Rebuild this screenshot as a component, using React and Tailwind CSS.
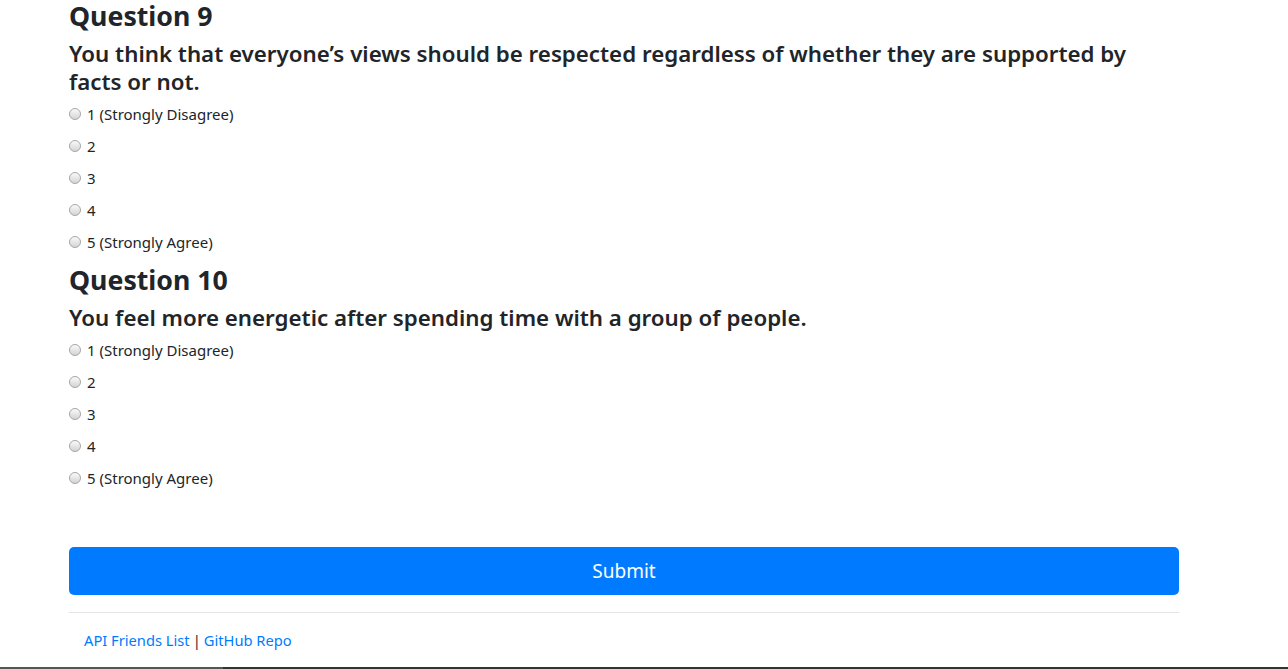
import React from 'react'

const questions = [
  {
    n: 9,
    text: 'You think that everyone’s views should be respected regardless of whether they are supported by facts or not.',
  },
  {
    n: 10,
    text: 'You feel more energetic after spending time with a group of people.',
  },
]

const options = ['1 (Strongly Disagree)', '2', '3', '4', '5 (Strongly Agree)']

function Radio() {
  return (
    <span className="inline-block w-[12px] h-[12px] rounded-full border border-[#a6a6a6] bg-gradient-to-b from-[#fafafa] to-[#d4d4d4] mr-[6px] shrink-0"></span>
  )
}

export default function App() {
  return (
    <div className="h-[669px] flex flex-col bg-white text-[#212529] font-['Noto_Sans',sans-serif] overflow-hidden">
      <div className="ml-[69px] w-[1110px] flex-1">
        {questions.map((q, i) => (
          <div key={q.n} className={i > 0 ? 'mt-[5px]' : ''}>
            <h3 className="text-[26.7px] leading-[32px] font-bold">Question {q.n}</h3>
            <h4 className="text-[22.3px] leading-[28px] font-semibold mt-[8px] mb-[3px] pr-[40px]">{q.text}</h4>
            {options.map((o) => (
              <div key={o} className="flex items-center h-[32px] text-[15px] leading-[20px] pb-[2px]">
                <Radio />
                <span>{o}</span>
              </div>
            ))}
          </div>
        ))}
        <button className="mt-[52px] w-full h-[48px] rounded-[5px] bg-[#007bff] text-white text-[19px]">Submit</button>
        <hr className="mt-[17px] border-t border-[#e5e5e5]" />
        <div className="pl-[15px] pt-[16px] text-[14.7px] leading-[22px]">
          <a className="text-[#007bff]">API Friends List</a>
          <span className="mx-[3px]">|</span>
          <a className="text-[#007bff]">GitHub Repo</a>
        </div>
      </div>
      <div className="h-[2px] flex">
        <div className="w-[223px] bg-[#555]"></div>
        <div className="flex-1 bg-[#333]"></div>
      </div>
    </div>
  )
}
